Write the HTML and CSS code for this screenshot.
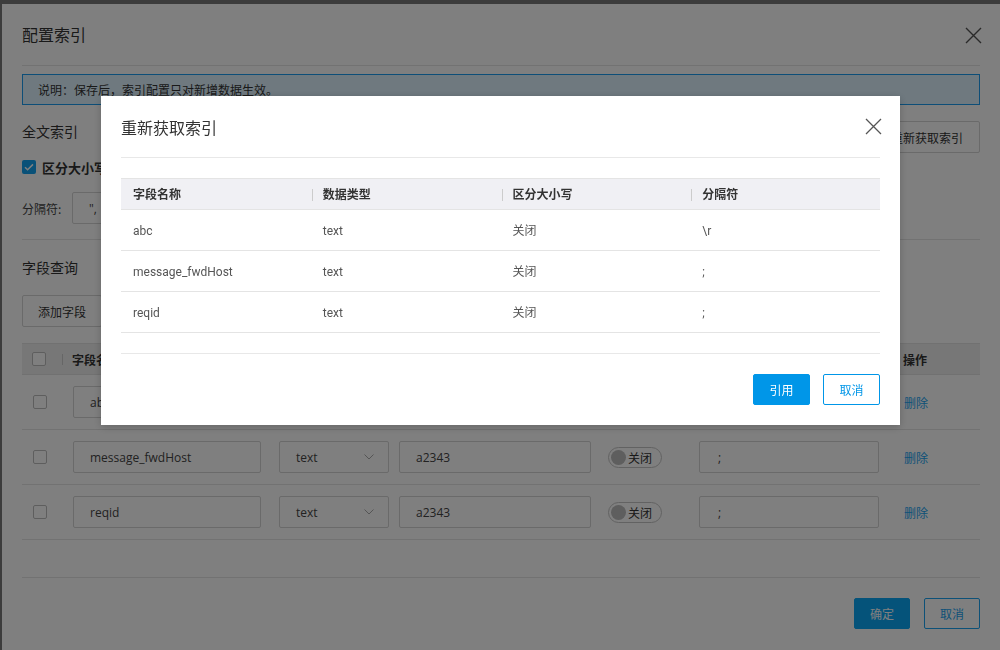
FILE: index.html
```html
<!DOCTYPE html>
<html lang="zh-CN">
<head>
    <meta charset="UTF-8">
    <title>配置索引</title>
    <link rel="stylesheet" href="styles.css">
</head>
<body>
<div class="dialog">
    <div class="dialog-head">
        <span class="dialog-title">配置索引</span>
        <svg class="close" width="17" height="17" viewBox="0 0 17 17"><path d="M1 1L16 16M16 1L1 16" stroke="#555" stroke-width="1.4" fill="none"/></svg>
    </div>
    <div class="alert">说明：保存后，索引配置只对新增数据生效。</div>

    <div class="section-head">
        <span class="section-title">全文索引</span>
        <button class="btn">重新获取索引</button>
    </div>
    <div class="check-row">
        <span class="checkbox checked"><svg width="14" height="14" viewBox="0 0 14 14"><path d="M3 7.2l2.6 2.6L11 4.4" stroke="#fff" stroke-width="1.5" fill="none"/></svg></span>
        <b>区分大小写</b>
    </div>
    <div class="field-row">
        <span class="field-label">分隔符:</span>
        <div class="input sep-all">",</div>
    </div>
    <div class="divider"></div>

    <div class="section-title query">字段查询</div>
    <button class="btn add">添加字段</button>

    <div class="field-table">
        <div class="frow fhead">
            <div class="cell"><span class="checkbox"></span></div>
            <div class="cell sep">字段名</div>
            <div class="cell"></div>
            <div class="cell"></div>
            <div class="cell"></div>
            <div class="cell"></div>
            <div class="cell">操作</div>
        </div>
        <div class="frow">
            <div class="cell"><span class="checkbox"></span></div>
            <div class="cell"><div class="input name">ab</div></div>
            <div class="cell"><div class="input select"></div></div>
            <div class="cell"><div class="input alias"></div></div>
            <div class="cell"></div>
            <div class="cell"><div class="input sep-in"></div></div>
            <div class="cell"><a class="link">删除</a></div>
        </div>
        <div class="frow">
            <div class="cell"><span class="checkbox"></span></div>
            <div class="cell"><div class="input name">message_fwdHost</div></div>
            <div class="cell"><div class="input select">text<svg width="10" height="6" viewBox="0 0 10 6"><path d="M0.5 0.5l4.5 4.5 4.5-4.5" stroke="#aaa" fill="none"/></svg></div></div>
            <div class="cell"><div class="input alias">a2343</div></div>
            <div class="cell"><span class="toggle"><i></i>关闭</span></div>
            <div class="cell"><div class="input sep-in">;</div></div>
            <div class="cell"><a class="link">删除</a></div>
        </div>
        <div class="frow">
            <div class="cell"><span class="checkbox"></span></div>
            <div class="cell"><div class="input name">reqid</div></div>
            <div class="cell"><div class="input select">text<svg width="10" height="6" viewBox="0 0 10 6"><path d="M0.5 0.5l4.5 4.5 4.5-4.5" stroke="#aaa" fill="none"/></svg></div></div>
            <div class="cell"><div class="input alias">a2343</div></div>
            <div class="cell"><span class="toggle"><i></i>关闭</span></div>
            <div class="cell"><div class="input sep-in">;</div></div>
            <div class="cell"><a class="link">删除</a></div>
        </div>
    </div>

    <div class="dialog-foot">
        <button class="btn primary">确定</button>
        <button class="btn ghost">取消</button>
    </div>
</div>

<div class="mask"></div>

<div class="modal">
    <div class="modal-head">
        <span class="modal-title">重新获取索引</span>
        <svg class="close" width="17" height="17" viewBox="0 0 17 17"><path d="M1 1L16 16M16 1L1 16" stroke="#555" stroke-width="1.3" fill="none"/></svg>
    </div>
    <div class="idx-table">
        <div class="irow ihead">
            <div class="icell">字段名称</div>
            <div class="icell sep">数据类型</div>
            <div class="icell sep">区分大小写</div>
            <div class="icell sep">分隔符</div>
        </div>
        <div class="irow">
            <div class="icell">abc</div>
            <div class="icell">text</div>
            <div class="icell zh">关闭</div>
            <div class="icell">\r</div>
        </div>
        <div class="irow">
            <div class="icell">message_fwdHost</div>
            <div class="icell">text</div>
            <div class="icell zh">关闭</div>
            <div class="icell">;</div>
        </div>
        <div class="irow">
            <div class="icell">reqid</div>
            <div class="icell">text</div>
            <div class="icell zh">关闭</div>
            <div class="icell">;</div>
        </div>
    </div>
    <div class="modal-foot">
        <button class="mbtn primary">引用</button>
        <button class="mbtn ghost">取消</button>
    </div>
</div>
</body>
</html>
```

FILE: styles.css
```css
body {
    margin: 0;
    height: 650px;
    overflow: hidden;
    background-color: #787878;
    font-family: "Noto Sans CJK SC", sans-serif;
    font-size: 12px;
    color: #333;
}
.dialog {
    margin: 4px 0 0 2px;
    padding: 0 20px;
    height: 700px;
    background-color: #fff;
}
.dialog-head {
    height: 61px;
    display: flex;
    align-items: center;
    justify-content: space-between;
    border-bottom: 1px solid #e4e4e4;
}
.dialog-title {
    font-size: 16px;
    padding-bottom: 2px;
}
.dialog-head .close {
    margin-right: -2px;
    margin-top: 2px;
}
.alert {
    margin-top: 8px;
    height: 29px;
    line-height: 29px;
    padding-left: 15px;
    border: 1px solid #1a9cf0;
    background-color: #def3ff;
    color: #333;
}
.section-head {
    margin-top: 16px;
    display: flex;
    justify-content: space-between;
    align-items: flex-start;
}
.section-title {
    font-size: 14px;
    line-height: 20px;
}
.btn {
    font-family: "Noto Sans CJK SC", sans-serif;
    font-size: 12px;
    height: 32px;
    padding: 0 16px;
    background-color: #fff;
    border: 1px solid #d4d4d4;
    border-radius: 2px;
    color: #333;
}
.check-row {
    margin-top: 7px;
    display: flex;
    align-items: center;
    height: 14px;
}
.check-row b {
    margin-left: 6px;
    font-size: 13px;
}
.checkbox {
    display: inline-block;
    width: 12px;
    height: 12px;
    border: 1px solid #bdbdbd;
    border-radius: 2px;
    background-color: #fff;
}
.checkbox.checked {
    width: 14px;
    height: 14px;
    border: none;
    background-color: #12a2f0;
}
.checkbox svg {
    display: block;
}
.field-row {
    margin-top: 18px;
    display: flex;
    align-items: center;
}
.field-label {
    width: 50px;
    color: #444;
}
.input {
    box-sizing: border-box;
    height: 32px;
    line-height: 29px;
    padding-top: 1px;
    border: 1px solid #d4d4d4;
    border-radius: 2px;
    padding-left: 16px;
    font-family: "Open Sans", "Noto Sans CJK SC", sans-serif;
    font-size: 12px;
    color: #444;
    background-color: #fff;
}
.sep-all {
    width: 260px;
}
.divider {
    margin-top: 15px;
    height: 1px;
    background-color: #e4e4e4;
}
.query {
    margin-top: 17px;
}
.add {
    display: block;
    margin-top: 18px;
    width: 80px;
    padding: 0;
}
.field-table {
    margin-top: 16px;
}
.frow {
    display: grid;
    grid-template-columns: 40px 206px 120px 209px 91px 205px 1fr;
    align-items: center;
    height: 54px;
    border-bottom: 1px solid #e4e4e4;
}
.frow .cell {
    padding-left: 11px;
}
.frow.fhead {
    height: 30px;
    background-color: #eee;
    border-top: 1px solid #e2e2e2;
    border-bottom: 1px solid #e2e2e2;
    font-weight: bold;
}
.fhead .cell {
    position: relative;
    padding-left: 10px;
}
.fhead .sep::before {
    content: "";
    position: absolute;
    left: 0;
    top: 3px;
    height: 11px;
    width: 1px;
    background-color: #ccc;
}
.frow .cell .checkbox {
    display: block;
}
.input.name {
    width: 188px;
}
.input.select {
    width: 110px;
    display: flex;
    align-items: center;
    justify-content: space-between;
    padding-right: 14px;
    padding-top: 0;
    line-height: normal;
}
.input.alias {
    width: 192px;
}
.input.sep-in {
    width: 180px;
    padding-left: 18px;
}
.toggle {
    box-sizing: border-box;
    display: inline-flex;
    align-items: center;
    width: 54px;
    height: 21px;
    border: 1px solid #c4c4c4;
    border-radius: 11px;
    padding-left: 2px;
    color: #333;
    font-size: 12px;
}
.toggle i {
    width: 15px;
    height: 15px;
    border-radius: 50%;
    background-color: #bcbcbc;
    margin-right: 2px;
}
.link {
    color: #1aa3f0;
}
.dialog-foot {
    margin-top: 37px;
    border-top: 1px solid #e4e4e4;
    display: flex;
    justify-content: flex-end;
    gap: 14px;
    padding-top: 20px;
}
.dialog-foot .btn {
    width: 56px;
    padding: 0;
    height: 31px;
    font-size: 12px;
}
.btn.primary {
    background-color: #0aa6f5;
    border-color: #0aa6f5;
    color: #fff;
}
.btn.ghost {
    border-color: #1aa3f0;
    color: #1aa3f0;
}
.mask {
    position: fixed;
    left: 0;
    top: 0;
    right: 0;
    bottom: 0;
    background-color: rgba(0, 0, 0, 0.5);
}
.modal {
    position: fixed;
    left: 101px;
    top: 96px;
    width: 799px;
    height: 329px;
    box-sizing: border-box;
    padding: 0 20px;
    background-color: #fff;
    box-shadow: 0 2px 8px rgba(0, 0, 0, 0.2);
}
.modal-head {
    height: 61px;
    display: flex;
    align-items: center;
    justify-content: space-between;
    border-bottom: 1px solid #e8e8e8;
}
.modal-title {
    font-size: 16px;
    color: #333;
}
.modal-head .close {
    margin-right: -2px;
}
.idx-table {
    margin-top: 20px;
    border-bottom: 1px solid #e8e8e8;
    padding-bottom: 20px;
}
.irow {
    display: grid;
    grid-template-columns: repeat(4, 1fr);
    height: 40px;
    align-items: center;
    border-bottom: 1px solid #e4e4e4;
}
.irow.ihead {
    height: 30px;
    background-color: #f0f0f4;
    border-top: 1px solid #e4e4e4;
    font-weight: bold;
    color: #333;
}
.icell {
    position: relative;
    padding-left: 12px;
    padding-top: 1px;
    font-family: Roboto, "Noto Sans CJK SC", sans-serif;
    font-size: 12px;
    line-height: 16px;
    color: #555;
}
.icell.zh {
    padding-top: 2px;
}
.ihead .icell {
    font-family: "Noto Sans CJK SC", sans-serif;
    color: #333;
    padding-top: 0;
}
.ihead .sep::before {
    content: "";
    position: absolute;
    left: 1px;
    top: 3px;
    height: 12px;
    width: 1px;
    background-color: #ccc;
}
.modal-foot {
    display: flex;
    justify-content: flex-end;
    gap: 13px;
    padding-top: 20px;
}
.mbtn {
    width: 57px;
    height: 31px;
    border-radius: 2px;
    font-family: "Noto Sans CJK SC", sans-serif;
    font-size: 12px;
}
.mbtn.primary {
    background-color: #0096e8;
    border: 1px solid #0096e8;
    color: #fff;
}
.mbtn.ghost {
    background-color: #fff;
    border: 1px solid #0096e8;
    color: #0096e8;
}
```
